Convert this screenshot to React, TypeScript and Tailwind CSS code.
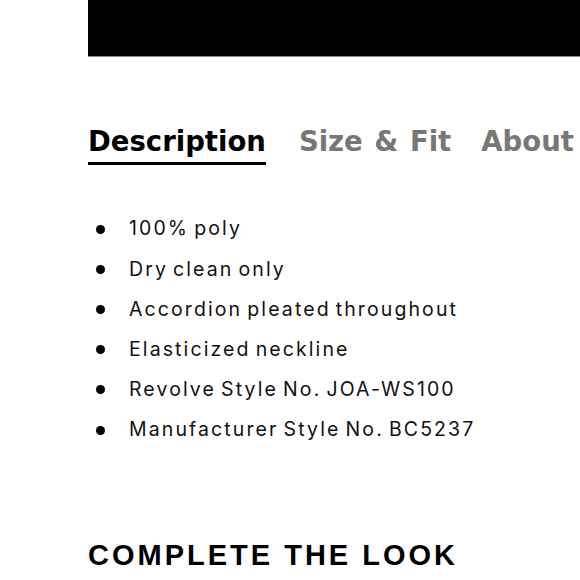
import React from "react";

const items = [
  "100% poly",
  "Dry clean only",
  "Accordion pleated throughout",
  "Elasticized neckline",
  "Revolve Style No. JOA-WS100",
  "Manufacturer Style No. BC5237",
];

export default function App() {
  return (
    <div className="w-[580px] h-[580px] overflow-hidden bg-white pl-[88px]" style={{ fontFamily: "Inter, 'Noto Sans', sans-serif" }}>
      <div className="h-[57px] bg-black border-b border-[#888] overflow-hidden flex justify-end">
        <div className="-mt-[25px] text-[#999] text-[24px] font-bold tracking-[4px] pr-[10px] leading-[28px] whitespace-nowrap">ADD TO BAG</div>
      </div>
      <div className="flex mt-[65px] text-[27.5px] font-bold leading-[38px]" style={{ fontFamily: "'DejaVu Sans', sans-serif" }}>
        <div className="text-black border-b-[3px] border-black pb-[2px] mr-[33px] whitespace-nowrap">Description</div>
        <div className="text-[#777] mr-[30px] whitespace-nowrap [word-spacing:2px]">Size &amp; Fit</div>
        <div className="text-[#777] whitespace-nowrap">About</div>
      </div>
      <ul className="mt-[44px] flex flex-col">
        {items.map((t) => (
          <li key={t} className="flex items-center h-[40.2px] text-[19.5px] tracking-[2.1px] [word-spacing:-2.5px] text-[#111] whitespace-nowrap">
            <span className="w-[9px] h-[9px] rounded-full bg-black ml-[8px] mr-[24px] shrink-0" />
            {t}
          </li>
        ))}
      </ul>
      <div className="mt-[90px] text-[29px] font-bold tracking-[3px] text-black leading-[30px] whitespace-nowrap" style={{ fontFamily: "'Liberation Sans', sans-serif" }}>
        COMPLETE THE LOOK
      </div>
    </div>
  );
}
